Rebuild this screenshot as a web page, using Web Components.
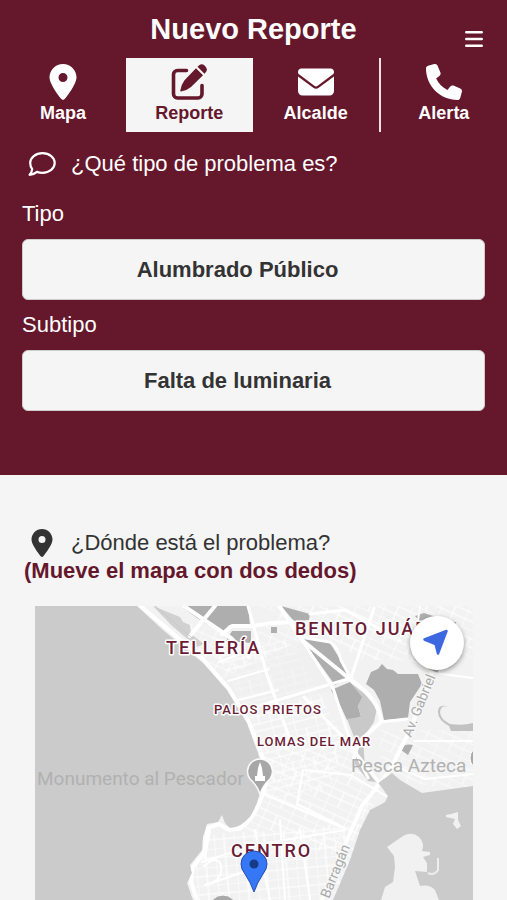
<!DOCTYPE html>
<html lang="es">
<head>
<meta charset="utf-8">
<meta name="viewport" content="width=device-width, initial-scale=1">
<title>Nuevo Reporte</title>
<style>
  :root { --wine: #65172c; --paper: #f5f5f5; --ink: #333; }
  html, body { margin: 0; }
  body { background: var(--paper); color: var(--ink); font: 22px/28px "Liberation Sans", Arial, sans-serif; }
</style>
</head>
<body>
<report-page></report-page>
<script>
const define = (name, html, setup) => {
  const template = document.createElement('template');
  template.innerHTML = html;
  customElements.define(name, class extends HTMLElement {
    connectedCallback() {
      if (this.shadowRoot) return;
      this.attachShadow({ mode: 'open' }).append(template.content.cloneNode(true));
      if (setup) setup(this, this.shadowRoot);
    }
  });
};

const ICONS = {
  pin: ['0 0 512 512', '<path fill-rule="evenodd" d="M279.7 499.2C331 435 448 279.4 448 192C448 86 362 0 256 0S64 86 64 192c0 87.4 117 243 168.3 307.2c12.3 15.3 35.1 15.3 47.4 0zM256 128a64 64 0 1 1 0 128 64 64 0 1 1 0-128z"/>'],
  edit: ['0 0 36 36', '<path d="M15.5 6.5H6.5a4 4 0 0 0-4 4V30a4 4 0 0 0 4 4H27a4 4 0 0 0 4-4V21.5" fill="none" stroke="currentColor" stroke-width="3.6" stroke-linecap="round"/><path d="M25 4.2L32 11.2L20 23Q16 26.5 10 27.5Q9.200 27.5 9.300 26.5Q10.500 20 13.500 16.200ZM26.500 2.700L28.500 1Q31-.6 33.800 1.800Q37 4.800 35.300 7.500L33.500 9.700Z"/>'],
  mail: ['0 0 512 512', '<path d="M48 64C21.500 64 0 85.500 0 112c0 15.100 7.100 29.300 19.200 38.400L236.800 313.600c11.400 8.500 27 8.500 38.400 0L492.800 150.400c12.100-9.100 19.200-23.300 19.200-38.400c0-26.500-21.500-48-48-48H48zM0 176V384c0 35.300 28.700 64 64 64H448c35.300 0 64-28.700 64-64V176L294.400 339.200c-22.800 17.100-54 17.100-76.800 0L0 176z"/>'],
  phone: ['0 0 512 512', '<path d="M164.900 24.600c-7.700-18.600-28-28.500-47.400-23.200l-88 24C12.100 30.200 0 46 0 64C0 311.400 200.600 512 448 512c18 0 33.800-12.100 38.600-29.500l24-88c5.300-19.400-4.600-39.700-23.200-47.400l-96-40c-16.300-6.800-35.200-2.100-46.300 11.600L304.700 368C234.300 334.700 177.300 277.700 144 207.300L193.300 167c13.700-11.200 18.400-30 11.600-46.300l-40-96z"/>'],
  comment: ['0 0 28 28', '<path d="M14.500 3.200C21.500 3.200 26.700 7.600 26.700 13S21.500 22.800 14.500 22.800Q11.500 22.800 9 21.900Q6 24.600 1.600 24.800Q3.900 22.300 4.200 19.200Q2.200 16.400 2.200 13C2.200 7.600 7.500 3.200 14.500 3.200Z" fill="none" stroke="currentColor" stroke-width="2.200" stroke-linejoin="round"/>'],
  menu: ['0 0 18 18', '<path d="M1.300 2.300H16.700M1.300 9H16.700M1.300 15.700H16.700" stroke="currentColor" stroke-width="2.600" stroke-linecap="round"/>'],
  locate: ['0 0 54 54', '<path d="M14.500 23.500L36.500 15L28 37.500L25.500 28Z" stroke="currentColor" stroke-width="2.500" stroke-linejoin="round"/>']
};

customElements.define('ui-icon', class extends HTMLElement {
  static observedAttributes = ['name'];
  constructor() {
    super();
    this.attachShadow({ mode: 'open' }).innerHTML = `
      <style>:host { display: block; flex: none; width: var(--size, 36px); height: var(--size, 36px); }
      svg { display: block; width: 100%; height: 100%; fill: currentColor; }</style>
      <svg aria-hidden="true"></svg>`;
  }
  attributeChangedCallback(attribute, before, name) {
    if (!ICONS[name]) return;
    const svg = this.shadowRoot.querySelector('svg');
    svg.setAttribute('viewBox', ICONS[name][0]);
    svg.innerHTML = ICONS[name][1];
  }
});

define('app-header', `
  <style>
    :host { display: grid; grid-template-columns: 1fr auto 1fr; height: 58px; align-items: center; }
    h1 { grid-column: 2; margin: 0; font-size: 29px; line-height: 34px; font-weight: 700; }
    button { justify-self: end; align-self: end; display: grid; place-items: center; width: 30px; height: 30px;
      margin: 0 18px 4px 0; padding: 0; border: 0; background: none; color: inherit; --size: 18px; }
  </style>
  <h1><slot></slot></h1>
  <button type="button" aria-label="Menú"><ui-icon name="menu"></ui-icon></button>`);

define('nav-tab', `
  <style>
    :host { display: block; flex: 1 1 0; box-sizing: border-box; }
    :host([active]) { background: var(--paper); color: var(--wine); }
    :host([divided]) { border-right: 2px solid #f0dfe3; }
    a { display: flex; flex-direction: column; align-items: center; height: 68px; padding-top: 6px;
      color: inherit; text-decoration: none; font-size: 18px; line-height: 26px; font-weight: 700; }
  </style>
  <a href="#"><ui-icon></ui-icon><slot></slot></a>`, (host, root) => {
  root.querySelector('ui-icon').setAttribute('name', host.getAttribute('icon'));
  if (host.hasAttribute('active')) root.querySelector('a').setAttribute('aria-current', 'page');
});

define('nav-tabs', `
  <style>:host { display: block; } nav { display: flex; }</style>
  <nav><slot></slot></nav>`);

define('question-line', `
  <style>
    :host { display: flex; align-items: center; gap: 9px; min-height: 28px; --size: 28px; }
    span { display: flex; justify-content: center; width: 40px; }
    h2 { margin: 0; font: inherit; }
  </style>
  <span><ui-icon></ui-icon></span><h2><slot></slot></h2>`, (host, root) => {
  root.querySelector('ui-icon').setAttribute('name', host.getAttribute('icon'));
});

define('select-field', `
  <style>
    :host { display: grid; gap: 12px; }
    label { line-height: 26px; }
    select { appearance: none; box-sizing: border-box; width: 100%; height: 61px; margin: 0; padding: 0 32px 0 0;
      border: 1px solid #ccc; border-radius: 6px; background: var(--paper); color: var(--ink);
      font: 700 22px/28px "Liberation Sans", Arial, sans-serif; text-align: center; text-align-last: center; }
  </style>
  <label for="choice"><slot></slot></label>
  <select id="choice"></select>`, (host, root) => {
  root.querySelector('select').add(new Option(host.getAttribute('value')));
});

define('city-map', `
  <style>
    :host { display: block; position: relative; overflow: hidden; background: #cbcbcb; }
    .map { position: absolute; inset: 0; width: 100%; height: 100%; }
    text { font-family: Roboto, sans-serif; }
    .area { fill: #6b1d36; font-weight: 500; stroke: #fff; stroke-width: 3px; stroke-linejoin: round; paint-order: stroke; }
    .big { font-size: 18px; letter-spacing: 2px; }
    .small { font-size: 13px; letter-spacing: 1px; }
    .place { fill: #b1b1b1; font-size: 19px; }
    .road { fill: #aaa; font-size: 14px; stroke: #f7f7f7; stroke-width: 2px; paint-order: stroke; }
    button { position: absolute; top: 10px; right: 9px; width: 54px; height: 54px; padding: 0; border: 0; border-radius: 50%;
      background: #fff; color: #3d68e0; box-shadow: 0 2px 5px #0006; --size: 54px; }
  </style>
  <svg class="map" viewBox="35 606 438 294" preserveAspectRatio="xMidYMin slice" role="img" aria-label="Mapa">
    <defs>
      <pattern id="g1" width="22" height="30" patternUnits="userSpaceOnUse" patternTransform="rotate(-14)">
        <path d="M0 0H22M0 7H22M0 15H22M0 22H22M0 0V30M11 0V15" fill="none" stroke="#fff" stroke-width="1.200"/></pattern>
      <pattern id="g2" width="26" height="24" patternUnits="userSpaceOnUse" patternTransform="rotate(24)">
        <path d="M0 0H26M0 8H26M0 16H26M0 0V24M13 8V24" fill="none" stroke="#fff" stroke-width="1.200"/></pattern>
      <pattern id="g3" width="20" height="18" patternUnits="userSpaceOnUse" patternTransform="rotate(-5)">
        <path d="M0 0H20M0 9H20M0 0V18M10 0V18" fill="none" stroke="#fff" stroke-width="1.200"/></pattern>
      <clipPath id="land"><path d="M137 606L163 630L203 663L227 690L247 723L258 753Q266 775 260 793Q257 806 250 817Q240 828 230 828L225 823L222 815L218 822L207 824L203 837L202 850L190 865L192 873L187 883L193 900H333L350 860L360 830L370 810L380 805L385 802L388 796L378 783L392 773L400 780L422 793L473 786V606Z"/></clipPath>
    </defs>
    <g clip-path="url(#land)">
      <path d="M130 600H480V900H130Z" fill="#f2f2f2"/>
      <path d="M215 650L290 640L345 740L330 790L255 800L240 700Z" fill="url(#g1)"/>
      <path d="M260 606H473V660H360L320 630Z" fill="url(#g2)"/>
      <path d="M262 750L350 740L380 790L350 860L245 830Z" fill="url(#g2)"/>
      <path d="M200 835L350 825V900H190Z" fill="url(#g3)"/>
      <path d="M160 615L250 640L290 606L320 640L230 690Z" fill="url(#g2)" opacity=".7"/>
      <path d="M380 730L473 730V790L380 780Z" fill="url(#g2)" opacity=".7"/>
      <path d="M300 640L332 690L245 718L220 680Z" fill="#eee" opacity=".5"/>

      <path fill="#d1d1d1" d="M153 606L180 617L183 622L190 625L191 634L204 644L197 647L172 626Z"/>
      <g fill="#aeaeae">
        <path d="M181 606H248L250 625H229L222 633L197 618ZM232 631H251V643L226 641Z"/>
        <path d="M281 606L310 614L309 620L294 621ZM271 627H277V633H271Z"/>
        <path d="M300 637L330 643L338 656L351 677L335 685L317 660Z"/>
        <path d="M331 690L350 682L363 697L358 706L361 717L347 720L341 707Z"/>
        <path d="M366 684L371 672L378 669L382 664L387 669L393 670L398 674L418 674L422 684L410 702L408 718L384 720L380 701L374 690Z"/>
        <path d="M415 616L424 613L433 616L442 622H456V629L430 634ZM401 750Q404 743 413 745L408 755Z"/>
      </g>
      <path fill="#c9c9c9" d="M352 684L365 694L377 708L374 722L363 738L365 768L376 782L368 781L355 764L354 737L347 719L361 717L358 706L362 697Z"/>
      <path d="M449 707Q441 704 440 712Q440 719 450 724Q463 726 473 723V731H451L449 726Q438 720 438 712Q438 703 449 707Z" fill="#c2c2c2"/>

      <g fill="none" stroke="#fff" stroke-linecap="round" stroke-linejoin="round">
        <path stroke-width="4" d="M137 603L203 659L229 689L249 722L261 753Q270 778 262 796Q256 813 247 823Q237 832 227 829L219 824L208 828L206 842L204 853L193 867L191 882L197 900"/>
        <path stroke-width="4" d="M181 604L231 638L249 657M215 606L190 636M222 634L232 626H252L272 623L293 622M278 604L302 640L351 680Q380 700 381 722L363 738Q358 741 354 758"/>
        <path stroke-width="3" d="M302 640L333 688L350 740L368 778M248 606L267 675L290 740M245 710L351 678M300 637L330 642Q338 647 341 660L350 677M381 722L407 719M351 678L366 632L374 608M310 614L345 610L400 640M304 697L344 738L385 790"/>
        <path stroke-width="4" d="M432 672L424 694L410 730L390 770L362 806L342 851L322 900"/>
        <path stroke-width="2" d="M303 770L297 804L339 825M303 770L351 775L386 796M261 793L341 827M219 662L251 650M228 681L269 669M239 700L278 690M202 862L255 845L345 830M205 885L250 870M257 800L240 830M393 765L425 779L473 774M414 741H473M435 673L473 678M420 607L412 660L432 672"/>
        <path stroke-width="2" d="M204 866Q218 854 221 866Q223 880 207 885M210 830L205 858M300 830L310 900M280 820L285 900M270 900L255 830"/>
      </g>
      <path d="M155 606L198 643" stroke="#c8c8c8" stroke-width="1"/>
    </g>
    <path fill="#f1f1f1" d="M387 847L403 836Q412 831 419 837Q425 843 422 851L430 852V855L423 857L427 863V872L415 871L420 886Q430 884 435 890L439 900H381L385 887L393 882L395 867L394 856ZM446 815L451 814L458 812V820L461 826L457 829L453 824L455 819L446 817Z"/>
    <path d="M438 858V870Q434 876 428 873" fill="none" stroke="#eee" stroke-width="2"/>

    <circle cx="223" cy="909" r="14" fill="#a9a9a9" stroke="#fff"/>
    <circle cx="482" cy="758" r="12" fill="#a9a9a9" stroke="#fff"/>
    <text class="place" x="37" y="785">Monumento al Pescador</text>
    <text class="place" x="351" y="772">Pesca Azteca</text>
    <text class="road" transform="translate(411 738) rotate(-68)">Av. Gabriel L</text>
    <text class="road" transform="translate(329 899) rotate(-68)">Barragán</text>
    <text class="area big" x="166" y="654">TELLERÍA</text>
    <text class="area big" x="295" y="635">BENITO JUÁREZ</text>
    <text class="area small" x="214" y="714">PALOS PRIETOS</text>
    <text class="area small" x="257" y="746">LOMAS DEL MAR</text>
    <text class="area big" x="231" y="857">CENTRO</text>

    <path d="M260 794Q257 785 250 779A12.500 12.500 0 1 1 270 779Q263 785 260 794Z" fill="#a7a7a7" stroke="#fafafa" stroke-width="1.500"/>
    <path d="M260 762L262 768L263 776H265V781H255V776H257L258 768Z" fill="#fff"/>
    <path d="M254 892Q251 883 245 874Q241 869 241 864A13 13 0 1 1 267 864Q267 869 263 874Q257 883 254 892Z" fill="#3677f5" stroke="#254eb0"/>
    <circle cx="254" cy="864" r="4.500" fill="#173a86"/>
  </svg>
  <button type="button" aria-label="Mi ubicación"><ui-icon name="locate"></ui-icon></button>`);

define('report-page', `
  <style>
    :host { display: flex; flex-direction: column; min-height: 100vh; }
    header { background: var(--wine); color: #fff; padding-bottom: 64px; }
    form { display: grid; gap: 12px; padding: 0 22px; }
    form question-line { height: 40px; margin: 12px 0 5px; }
    main { flex: 1; display: flex; flex-direction: column; padding-top: 54px; }
    .where { padding: 0 22px; }
    p { margin: 0 0 21px; padding-left: 2px; color: var(--wine); font-weight: 700; }
    city-map { flex: 1; min-height: 294px; margin: 0 34px 0 35px; }
  </style>
  <header>
    <app-header>Nuevo Reporte</app-header>
    <nav-tabs>
      <nav-tab icon="pin">Mapa</nav-tab>
      <nav-tab icon="edit" active>Reporte</nav-tab>
      <nav-tab icon="mail" divided>Alcalde</nav-tab>
      <nav-tab icon="phone">Alerta</nav-tab>
    </nav-tabs>
    <form>
      <question-line icon="comment">¿Qué tipo de problema es?</question-line>
      <select-field value="Alumbrado Público">Tipo</select-field>
      <select-field value="Falta de luminaria">Subtipo</select-field>
    </form>
  </header>
  <main>
    <div class="where">
      <question-line icon="pin">¿Dónde está el problema?</question-line>
      <p>(Mueve el mapa con dos dedos)</p>
    </div>
    <city-map></city-map>
  </main>`);
</script>
</body>
</html>
